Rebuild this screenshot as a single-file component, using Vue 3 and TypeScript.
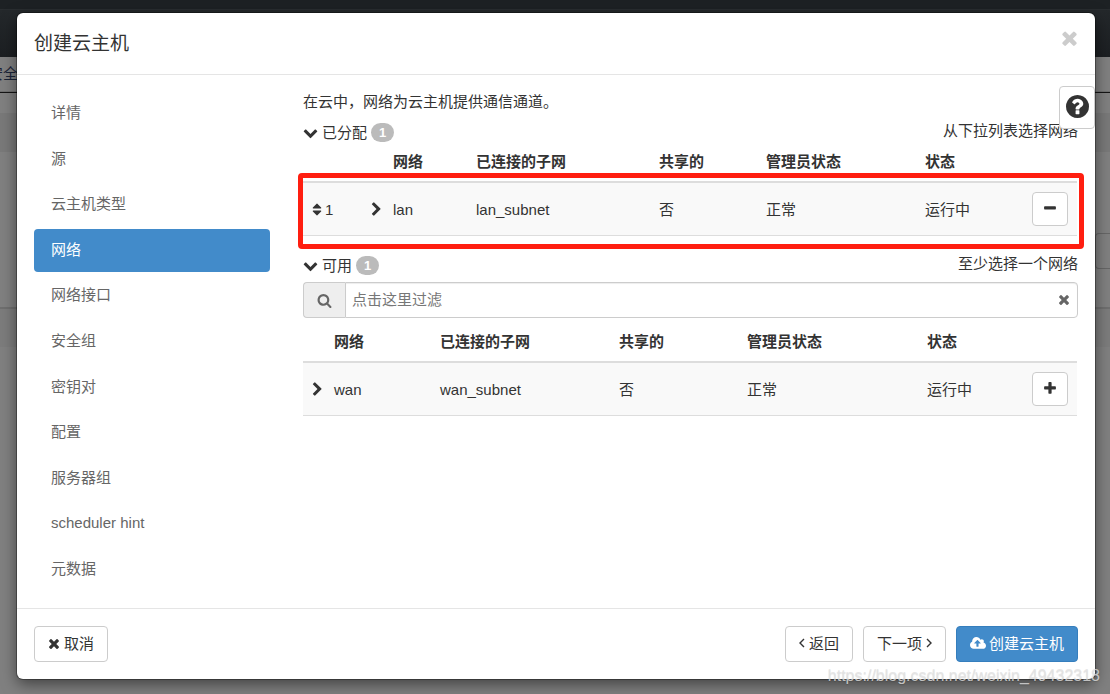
<script setup lang="ts">
import { ref } from 'vue'

interface Icon {
  box: string
  width: number
  d: string
}

interface Network {
  name: string
  subnet: string
  shared: string
  admin: string
  status: string
}

const icons: Record<string, Icon> = {
  down: { box: '0 0 1792 1792', width: 15, d: 'M1683 808l-742 741q-19 19-45 19t-45-19l-742-741q-19-19-19-45.5t19-45.5l166-165q19-19 45-19t45 19l531 531 531-531q19-19 45-19t45 19l166 165q19 19 19 45.5t-19 45.5z' },
  right: { box: '256 0 1280 1792', width: 11, d: 'M1363 877l-742 742q-19 19-45 19t-45-19l-166-166q-19-19-19-45t19-45l531-531-531-531q-19-19-19-45t19-45l166-166q19-19 45-19t45 19l742 742q19 19 19 45t-19 45z' },
  times: { box: '192 0 1408 1792', width: 12, d: 'M1490 1322q0 40-28 68l-136 136q-28 28-68 28t-68-28l-294-294-294 294q-28 28-68 28t-68-28l-136-136q-28-28-28-68t28-68l294-294-294-294q-28-28-28-68t28-68l136-136q28-28 68-28t68 28l294 294 294-294q28-28 68-28t68 28l136 136q28 28 28 68t-28 68l-294 294 294 294q28 28 28 68z' },
  plus: { box: '192 0 1408 1792', width: 12, d: 'M1600 736v192q0 40-28 68t-68 28h-416v416q0 40-28 68t-68 28h-192q-40 0-68-28t-28-68v-416h-416q-40 0-68-28t-28-68v-192q0-40 28-68t68-28h416v-416q0-40 28-68t68-28h192q40 0 68 28t28 68v416h416q40 0 68 28t28 68z' },
  minus: { box: '192 0 1408 1792', width: 12, d: 'M1600 736v192q0 40-28 68t-68 28h-1216q-40 0-68-28t-28-68v-192q0-40 28-68t68-28h1216q40 0 68 28t28 68z' },
  search: { box: '0 0 1792 1792', width: 15, d: 'M1216 832q0-185-131.5-316.5t-316.5-131.5-316.5 131.5-131.5 316.5 131.5 316.5 316.5 131.5 316.5-131.5 131.5-316.5zm512 832q0 52-38 90t-90 38q-54 0-90-38l-343-342q-179 124-399 124-143 0-273.5-55.5t-225-150-150-225-55.5-273.5 55.5-273.5 150-225 225-150 273.5-55.5 273.5 55.5 225 150 150 225 55.5 273.5q0 220-124 399l343 343q37 37 37 90z' },
  help: { box: '128 128 1536 1536', width: 23, d: 'M1024 1376v-192q0-14-9-23t-23-9h-192q-14 0-23 9t-9 23v192q0 14 9 23t23 9h192q14 0 23-9t9-23zm256-672q0-88-55.5-163t-138.5-116-170-41q-243 0-371 213-15 24 8 42l132 100q7 6 19 6 16 0 25-12 53-68 86-92 34-24 86-24 48 0 85.5 26t37.5 59q0 38-20 61t-68 45q-63 28-115.5 86.5t-52.5 125.5v36q0 14 9 23t23 9h192q14 0 23-9t9-23q0-19 21.5-49.5t54.5-49.5q32-18 49-28.5t46-35 44.5-48 28-60.5 12.5-81zm384 192q0 209-103 385.5t-279.5 279.5-385.5 103-385.5-103-279.5-279.5-103-385.5 103-385.5 279.5-279.5 385.5-103 385.5 103 279.5 279.5 103 385.5z' },
  sort: { box: '320 0 1152 1792', width: 10, d: 'M1408 1088q0 26-19 45l-448 448q-19 19-45 19t-45-19l-448-448q-19-19-19-45t19-45 45-19h896q26 0 45 19t19 45zm0-384q0 26-19 45t-45 19h-896q-26 0-45-19t-19-45 19-45l448-448q19-19 45-19t45 19l448 448q19 19 19 45z' },
  cloud: { box: '-64 0 1920 1792', width: 16, d: 'M1216 864q0-14-9-23l-352-352q-9-9-23-9t-23 9l-351 351q-10 12-10 24 0 14 9 23t23 9h224v352q0 13 9.5 22.5t22.5 9.5h192q13 0 22.5-9.5t9.5-22.5v-352h224q13 0 22.5-9.5t9.5-22.5zm640 288q0 159-112.5 271.5t-271.5 112.5h-1088q-185 0-316.5-131.5t-131.5-316.5q0-130 70-240t188-165q-2-30-2-43 0-212 150-362t362-150q156 0 285.5 87t188.5 231q71-62 166-62 106 0 181 75t75 181q0 76-41 138 130 31 213.5 135.5t83.5 238.5z' },
}

const steps = ['详情', '源', '云主机类型', '网络', '网络接口', '安全组', '密钥对', '配置', '服务器组', 'scheduler hint', '元数据']
const current = ref('网络')
const filter = ref('')
const columns = ['网络', '已连接的子网', '共享的', '管理员状态', '状态']
const allocated: Network[] = [{ name: 'lan', subnet: 'lan_subnet', shared: '否', admin: '正常', status: '运行中' }]
const available: Network[] = [{ name: 'wan', subnet: 'wan_subnet', shared: '否', admin: '正常', status: '运行中' }]
const showAllocated = ref(true)
const showAvailable = ref(true)
</script>

<template>
  <div class="screen">
    <div class="page" aria-hidden="true">
      <div class="topbar"></div>
      <div class="navbar"></div>
      <div class="tabs"><span>安全</span></div>
      <div class="band spacer"></div>
      <div class="band shaded"></div>
      <div class="band tools"><i></i></div>
      <div class="band lined"></div>
    </div>

    <section class="modal" role="dialog" aria-labelledby="title">
      <header class="head">
        <h1 id="title">创建云主机</h1>
        <button class="close" type="button" aria-label="关闭">
          <svg :viewBox="icons.times.box"><path :d="icons.times.d" /></svg>
        </button>
      </header>

      <div class="body">
        <nav class="steps">
          <a v-for="s in steps" :key="s" href="#" :class="{ active: s === current }" @click.prevent="current = s">{{ s }}</a>
        </nav>

        <main class="content">
          <p class="intro">在云中，网络为云主机提供通信通道。</p>

          <div class="bar">
            <button class="toggle" type="button" @click="showAllocated = !showAllocated">
              <svg :width="icons.down.width" height="15" :viewBox="icons.down.box"><path :d="icons.down.d" /></svg>
              <span>已分配</span><b class="badge">{{ allocated.length }}</b>
            </button>
            <span class="hint">从下拉列表选择网络</span>
          </div>
          <div class="allocated">
            <table v-if="showAllocated">
              <colgroup>
                <col class="a-order"><col class="chev"><col class="a-name"><col class="a-subnet"><col class="a-shared"><col class="a-admin"><col class="a-status"><col class="action">
              </colgroup>
              <thead>
                <tr><th></th><th></th><th v-for="c in columns" :key="c">{{ c }}</th><th></th></tr>
              </thead>
              <tbody>
                <tr v-for="(n, i) in allocated" :key="n.name">
                  <td>
                    <span class="order">
                      <svg :width="icons.sort.width" height="15" :viewBox="icons.sort.box"><path :d="icons.sort.d" /></svg>{{ i + 1 }}
                    </span>
                  </td>
                  <td>
                    <button class="expand" type="button" aria-label="展开">
                      <svg :width="icons.right.width" height="15" :viewBox="icons.right.box"><path :d="icons.right.d" /></svg>
                    </button>
                  </td>
                  <td>{{ n.name }}</td><td>{{ n.subnet }}</td><td>{{ n.shared }}</td><td>{{ n.admin }}</td><td>{{ n.status }}</td>
                  <td>
                    <button class="btn square" type="button" aria-label="移除">
                      <svg :width="icons.minus.width" height="15" :viewBox="icons.minus.box"><path :d="icons.minus.d" /></svg>
                    </button>
                  </td>
                </tr>
              </tbody>
            </table>
            <div class="marker"></div>
          </div>

          <div class="bar">
            <button class="toggle" type="button" @click="showAvailable = !showAvailable">
              <svg :width="icons.down.width" height="15" :viewBox="icons.down.box"><path :d="icons.down.d" /></svg>
              <span>可用</span><b class="badge">{{ available.length }}</b>
            </button>
            <span class="hint">至少选择一个网络</span>
          </div>
          <div class="filter">
            <label class="addon" for="filter" aria-label="过滤">
              <svg :width="icons.search.width" height="15" :viewBox="icons.search.box"><path :d="icons.search.d" /></svg>
            </label>
            <input id="filter" v-model="filter" type="text" placeholder="点击这里过滤">
            <button class="clear" type="button" aria-label="清除" @click="filter = ''">
              <svg :width="icons.times.width" height="15" :viewBox="icons.times.box"><path :d="icons.times.d" /></svg>
            </button>
          </div>
          <table v-if="showAvailable">
            <colgroup>
              <col class="chev"><col class="b-name"><col class="b-subnet"><col class="b-shared"><col class="b-admin"><col class="b-status"><col class="action">
            </colgroup>
            <thead>
              <tr><th></th><th v-for="c in columns" :key="c">{{ c }}</th><th></th></tr>
            </thead>
            <tbody>
              <tr v-for="n in available" :key="n.name">
                <td>
                  <button class="expand" type="button" aria-label="展开">
                    <svg :width="icons.right.width" height="15" :viewBox="icons.right.box"><path :d="icons.right.d" /></svg>
                  </button>
                </td>
                <td>{{ n.name }}</td><td>{{ n.subnet }}</td><td>{{ n.shared }}</td><td>{{ n.admin }}</td><td>{{ n.status }}</td>
                <td>
                  <button class="btn square" type="button" aria-label="添加">
                    <svg :width="icons.plus.width" height="15" :viewBox="icons.plus.box"><path :d="icons.plus.d" /></svg>
                  </button>
                </td>
              </tr>
            </tbody>
          </table>
        </main>

        <button class="help" type="button" aria-label="帮助">
          <svg :width="icons.help.width" height="23" :viewBox="icons.help.box"><path :d="icons.help.d" /></svg>
        </button>
      </div>

      <footer class="foot">
        <button class="btn cancel" type="button">
          <svg :width="icons.times.width" height="15" :viewBox="icons.times.box"><path :d="icons.times.d" /></svg>取消
        </button>
        <button class="btn" type="button">
          <svg class="angle" width="6" height="10" viewBox="0 0 6 10"><path d="M5 1L1 5l4 4" /></svg>返回
        </button>
        <button class="btn" type="button">
          下一项<svg class="angle" width="6" height="10" viewBox="0 0 6 10"><path d="M1 1l4 4-4 4" /></svg>
        </button>
        <button class="btn primary" type="button">
          <svg :width="icons.cloud.width" height="15" :viewBox="icons.cloud.box"><path :d="icons.cloud.d" /></svg>创建云主机
        </button>
      </footer>
    </section>

    <div class="watermark">https://blog.csdn.net/weixin_49432318</div>
  </div>
</template>

<style>
body {
  margin: 0;
  background: #808080;
}
</style>

<style scoped>
* {
  box-sizing: border-box;
}
.screen {
  position: relative;
  display: flex;
  min-height: 100vh;
  padding: 13px 15px 15px 17px;
  overflow: hidden;
  color: #333;
  font: 15px/21px "Liberation Sans", "Noto Sans CJK SC", sans-serif;
}
button,
input {
  font: inherit;
  color: inherit;
}
button {
  padding: 0;
  border: 0;
  background: none;
  cursor: pointer;
}
svg {
  display: block;
  flex: none;
  fill: currentColor;
}
.page {
  position: absolute;
  inset: 0;
  background: #808080;
}
.topbar {
  height: 10px;
  background: #1d2124;
  border-bottom: 1px solid #292d30;
}
.navbar {
  height: 47px;
  background: linear-gradient(#24282b, #1c1f22);
}
.tabs {
  display: flex;
  align-items: center;
  height: 36px;
  padding-bottom: 2px;
  border-bottom: 1px solid #151515;
  box-shadow: inset 0 -1px #707070;
  color: #1b2438;
}
.tabs span {
  margin-left: -12px;
}
.spacer {
  height: 20px;
}
.shaded {
  height: 39px;
  background: #797979;
}
.tools {
  display: flex;
  justify-content: flex-end;
  height: 155px;
  padding-top: 81px;
}
.tools i {
  width: 15px;
  height: 36px;
  border: 1px solid #666;
  border-right: 0;
  border-radius: 4px 0 0 4px;
}
.lined {
  height: 40px;
  border-top: 2px solid #6f6f6f;
  background: #7c7c7c;
}
.modal {
  position: relative;
  display: flex;
  flex: 1;
  flex-direction: column;
  min-width: 0;
  border-radius: 6px;
  background: #fff;
  box-shadow: 0 0 0 1px rgba(0, 0, 0, .3), 0 5px 15px rgba(0, 0, 0, .5);
}
.head {
  display: flex;
  align-items: flex-start;
  justify-content: space-between;
  padding: 17px;
  border-bottom: 1px solid #e5e5e5;
}
h1 {
  margin: 0;
  font-size: 19px;
  font-weight: 400;
  line-height: 27px;
}
.close {
  color: #ccc;
}
.close svg {
  width: 17px;
  height: 22px;
  margin-top: -3px;
}
.body {
  position: relative;
  display: flex;
  flex: 1;
  gap: 33px;
  padding: 17px;
}
.steps {
  display: flex;
  flex: 0 0 236px;
  flex-direction: column;
  justify-content: space-between;
}
.steps a {
  padding: 9px 17px 11px;
  border-radius: 4px;
  color: #666;
  line-height: 23px;
  text-decoration: none;
}
.steps .active {
  background: #428bca;
  color: #fff;
}
.content {
  flex: 1;
  min-width: 0;
}
.intro {
  margin: 0 0 11px;
  line-height: 19px;
}
.bar {
  display: flex;
  align-items: flex-start;
  justify-content: space-between;
  height: 20px;
}
.toggle {
  display: flex;
  align-items: center;
  gap: 4px;
  height: 20px;
}
.badge {
  min-width: 23px;
  border-radius: 10px;
  background: #bbb;
  color: #fff;
  font-size: 13px;
  line-height: 19px;
  text-align: center;
}
.hint {
  line-height: 17px;
}
.allocated {
  position: relative;
  margin-bottom: 19px;
}
.marker {
  position: absolute;
  inset: 31px -6px -13px -5px;
  border: 5px solid #ff1e10;
  border-radius: 4px;
  pointer-events: none;
}
table {
  width: calc(100% - 1px);
  border-collapse: separate;
  border-spacing: 0;
  table-layout: fixed;
}
th,
td {
  padding: 9px 0 9px 9px;
  text-align: left;
  white-space: nowrap;
}
td {
  border-top: 2px solid #ddd;
  border-bottom: 1px solid #ddd;
  background: #f9f9f9;
}
.a-order { width: 59px; }
.chev { width: 22px; }
.a-name { width: 83px; }
.a-subnet { width: 183px; }
.a-shared { width: 107px; }
.a-admin { width: 159px; }
.a-status { width: 107px; }
.action { width: 54px; }
.b-name { width: 106px; }
.b-subnet { width: 179px; }
.b-shared { width: 128px; }
.b-admin { width: 180px; }
.b-status { width: 105px; }
.order {
  display: flex;
  align-items: center;
  gap: 3px;
}
.expand {
  display: block;
}
.filter {
  position: relative;
  display: flex;
  height: 36px;
  margin: 7px 0 4px;
}
.addon {
  display: flex;
  align-items: center;
  justify-content: center;
  width: 42px;
  border: 1px solid #ccc;
  border-right: 0;
  border-radius: 4px 0 0 4px;
  background: #eee;
  color: #666;
}
.filter input {
  flex: 1;
  min-width: 0;
  padding: 0 30px 2px 6px;
  border: 1px solid #ccc;
  border-radius: 0 4px 4px 0;
  outline: 0;
  background: #fff;
  box-shadow: inset 0 1px 1px rgba(0, 0, 0, .075);
}
.filter input::placeholder {
  color: #777;
  opacity: 1;
}
.clear {
  position: absolute;
  top: 10px;
  right: 8px;
  color: #666;
}
.btn {
  display: flex;
  align-items: center;
  justify-content: center;
  gap: 4px;
  height: 36px;
  padding: 0 13px 2px;
  border: 1px solid #ccc;
  border-radius: 4px;
  background: #fff;
  white-space: nowrap;
}
.square {
  width: 36px;
  height: 34px;
  padding: 0 0 2px;
}
.angle {
  fill: none;
  stroke: currentColor;
  stroke-width: 1.4;
}
.primary {
  gap: 3px;
  border-color: #357ebd;
  background: #428bca;
  color: #fff;
}
.help {
  position: absolute;
  top: 11px;
  right: 0;
  display: flex;
  align-items: center;
  justify-content: center;
  width: 36px;
  height: 43px;
  padding-bottom: 2px;
  border: 1px solid #ccc;
  border-radius: 4px;
  background: #fff;
}
.foot {
  display: flex;
  gap: 10px;
  padding: 17px;
  border-top: 1px solid #e5e5e5;
}
.cancel {
  margin-right: auto;
}
.watermark {
  position: absolute;
  right: 10px;
  bottom: 8px;
  color: rgba(225, 225, 225, .8);
  font-size: 16px;
  text-shadow: 0 1px 1px rgba(0, 0, 0, .12);
  pointer-events: none;
}
</style>
